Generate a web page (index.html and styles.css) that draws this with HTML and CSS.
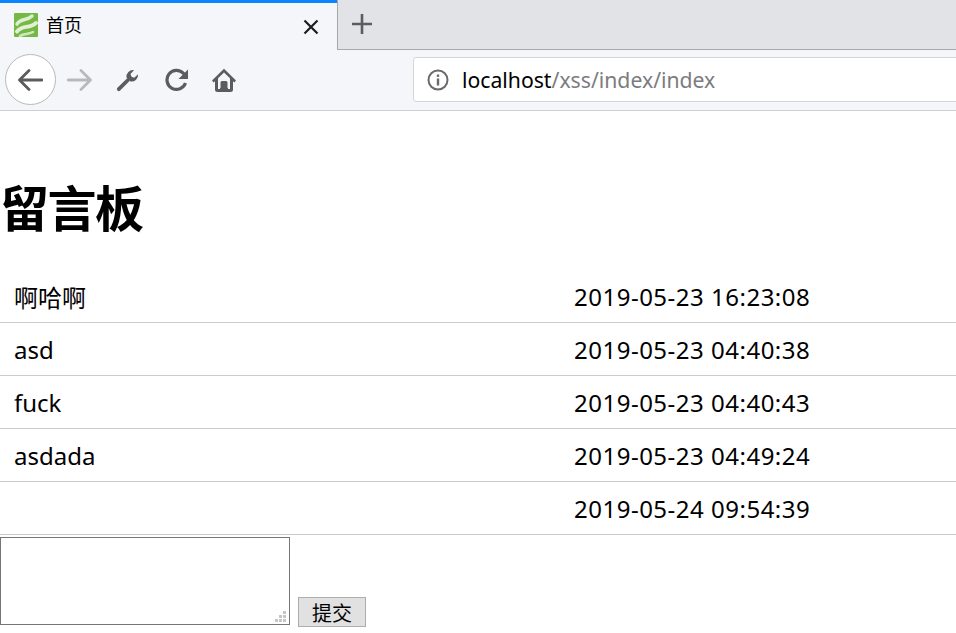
FILE: index.html
```html
<!DOCTYPE html>
<html lang="zh-CN">
<head>
<meta charset="utf-8">
<title>首页</title>
<link rel="stylesheet" href="styles.css">
</head>
<body>
<header class="browser">
  <div class="tabbar">
    <div class="tab">
      <svg class="favicon" viewBox="0 0 24 24" aria-hidden="true">
        <rect width="24" height="24" rx="1" fill="#74b944"/>
        <path d="M3 11C7 5 13 8 18 3" fill="none" stroke="#eaf4e0" stroke-width="3.400" stroke-linecap="round" opacity=".9"/>
        <path d="M3 18.500C8 12 15 16 22 10" fill="none" stroke="#eef6e6" stroke-width="3.800" stroke-linecap="round" opacity=".9"/>
        <path d="M6 23C10 20 14 22 19 19" fill="none" stroke="#dcecca" stroke-width="2.600" stroke-linecap="round" opacity=".9"/>
      </svg>
      <span class="tab-title">首页</span>
      <svg class="tab-close" viewBox="0 0 16 16" aria-hidden="true">
        <path d="M1.500 1.500L14.500 14.500M14.500 1.500L1.500 14.500" stroke="#1c1c1c" stroke-width="2.200" fill="none"/>
      </svg>
    </div>
    <div class="tab-rest">
      <svg class="tab-new" viewBox="0 0 20 20" aria-hidden="true">
        <path d="M10 0V20M0 10H20" stroke="#5c5c5f" stroke-width="2.600" fill="none" stroke-linecap="round"/>
      </svg>
    </div>
  </div>
  <div class="toolbar">
    <div class="back">
      <svg class="icon-arrow" viewBox="0 0 26 22" aria-hidden="true">
        <path d="M25 11H2.500M12 1.500L2.500 11L12 20.500" stroke="#5c5c5f" stroke-width="2.800" fill="none" stroke-linecap="round" stroke-linejoin="round"/>
      </svg>
    </div>
    <svg class="icon-arrow forward" viewBox="0 0 26 22" aria-hidden="true">
      <path d="M1 11H23.500M14 1.500L23.500 11L14 20.500" stroke="#b9b9bb" stroke-width="2.800" fill="none" stroke-linecap="round" stroke-linejoin="round"/>
    </svg>
    <svg class="icon wrench" viewBox="0 0 24 24" aria-hidden="true">
      <path d="M2.800 21.200L12 12" stroke="#5c5c5f" stroke-width="3.800" stroke-linecap="round" fill="none"/>
      <path d="M10.500 9.500A6.500 6.500 0 0 1 18 2.200L14.500 6L15.500 8.700L18.200 9.700L22 6.200A6.500 6.500 0 0 1 14.500 13.500Z" fill="#5c5c5f"/>
    </svg>
    <svg class="icon reload" viewBox="0 0 24 24" aria-hidden="true">
      <path d="M20.500 15A9.500 9.500 0 1 1 18.500 5.500L21 8" stroke="#5c5c5f" stroke-width="3.200" fill="none"/>
      <path d="M23 1.500V11H13.500Z" fill="#5c5c5f"/>
    </svg>
    <svg class="icon home" viewBox="0 0 24 24" aria-hidden="true">
      <path d="M12 .8L24 12.500L22.300 14.400L21 13.200V21.500A2.500 2.500 0 0 1 18.500 24H5.500A2.500 2.500 0 0 1 3 21.500V13.200L1.700 14.400L0 12.500ZM12 4.500L6 10.300V21H8.500V14.500A1.500 1.500 0 0 1 10 13H14A1.500 1.500 0 0 1 15.500 14.500V21H18V10.300Z" fill="#5c5c5f"/>
      <rect x="8" y="20" width="8" height="2" fill="#5c5c5f"/>
      <rect x="11.300" y="16.500" width="1.500" height="2" fill="#5c5c5f"/>
    </svg>
    <div class="address">
      <svg class="info" viewBox="0 0 22 22" aria-hidden="true">
        <circle cx="11" cy="11" r="9.500" stroke="#6a6a6d" stroke-width="2" fill="none"/>
        <rect x="9.800" y="9.500" width="2.400" height="7" fill="#6a6a6d"/>
        <rect x="9.800" y="5.500" width="2.400" height="2.400" fill="#6a6a6d"/>
      </svg>
      <span class="host">localhost</span><span class="path">/xss/index/index</span>
    </div>
  </div>
</header>
<main>
  <h1>留言板</h1>
  <table class="messages">
    <tr><td class="msg">啊哈啊</td><td class="time">2019-05-23 16:23:08</td></tr>
    <tr><td class="msg">asd</td><td class="time">2019-05-23 04:40:38</td></tr>
    <tr><td class="msg">fuck</td><td class="time">2019-05-23 04:40:43</td></tr>
    <tr><td class="msg">asdada</td><td class="time">2019-05-23 04:49:24</td></tr>
    <tr><td class="msg"></td><td class="time">2019-05-24 09:54:39</td></tr>
  </table>
  <form class="post">
    <div class="box-wrap">
      <textarea class="box" aria-label="留言"></textarea>
      <svg class="grip" viewBox="0 0 12 12" aria-hidden="true">
        <path d="M8 0h3v3H8zM4 4h3v3H4zM8 4h3v3H8zM0 8h3v3H0zM4 8h3v3H4zM8 8h3v3H8z" fill="#c6c6c6"/>
      </svg>
    </div>
    <button class="submit" type="button">提交</button>
  </form>
</main>
</body>
</html>
```

FILE: styles.css
```css
html, body {
  margin: 0;
  padding: 0;
  height: 633px;
  overflow: hidden;
  background: #fff;
}
body {
  font-family: "Noto Sans", "Noto Sans CJK SC", sans-serif;
  color: #000;
}
.browser {
  display: flex;
  flex-direction: column;
  height: 111px;
  background: #f5f6f9;
  border-bottom: 1px solid #cfcfd1;
  box-sizing: border-box;
  overflow: hidden;
}
.tabbar {
  display: flex;
  height: 50px;
}
.tab {
  width: 337px;
  box-sizing: border-box;
  border-top: 3px solid #0a84ff;
  display: flex;
  align-items: center;
  padding-left: 14px;
  padding-right: 18px;
}
.favicon {
  width: 24px;
  height: 24px;
  margin-top: -3px;
}
.tab-title {
  margin-left: 8px;
  font: 18px "Noto Sans CJK SC", sans-serif;
  flex: 1;
  margin-top: -5px;
}
.tab-close {
  width: 16px;
  height: 16px;
}
.tab-rest {
  flex: 1;
  background: #e2e3e6;
  border-left: 1px solid #a8a8aa;
  border-bottom: 1px solid #a8a8aa;
  display: flex;
  align-items: center;
  padding-left: 14px;
}
.tab-new {
  width: 20px;
  height: 20px;
  margin-top: -2px;
}
.toolbar {
  flex: 1;
  display: flex;
  align-items: center;
  padding-left: 5px;
}
.back {
  width: 51px;
  height: 51px;
  margin-bottom: 1px;
  padding-right: 2px;
  box-sizing: border-box;
  border: 1px solid #b9b9bb;
  border-radius: 50%;
  background: #fff;
  display: flex;
  align-items: center;
  justify-content: center;
  flex: none;
}
.icon-arrow {
  width: 26px;
  height: 22px;
  flex: none;
}
.forward {
  margin-left: 11px;
}
.icon {
  width: 24px;
  height: 24px;
  flex: none;
}
.wrench {
  margin-left: 23px;
}
.reload {
  margin-left: 25px;
}
.home {
  margin-left: 23px;
}
.address {
  margin-left: 177px;
  margin-bottom: 1px;
  width: 600px;
  height: 45px;
  flex: none;
  box-sizing: border-box;
  background: #fff;
  border: 1px solid #d6d6d8;
  border-radius: 3px;
  display: flex;
  align-items: center;
  padding-left: 13px;
  font: 21.200px "Noto Sans", sans-serif;
}
.info {
  width: 22px;
  height: 22px;
  margin-right: 13px;
}
.host {
  color: #000;
}
.path {
  color: #7c7c80;
}
h1 {
  font: bold 49px/60px "Noto Sans CJK SC", sans-serif;
  letter-spacing: -1.500px;
  margin: 65px 0 34px;
}
.messages {
  width: 100%;
  border-collapse: collapse;
  table-layout: fixed;
  font-size: 24px;
}
.messages td {
  height: 52px;
  padding: 0 14px;
  border-bottom: 1px solid #ccc;
  box-sizing: content-box;
}
.messages .msg {
  width: 532px;
}
.messages .time {
  letter-spacing: .5px;
}
.post {
  display: flex;
  align-items: flex-end;
  gap: 8px;
  margin-top: 2px;
}
.box-wrap {
  position: relative;
  margin-bottom: 2px;
}
.box {
  display: block;
  width: 290px;
  height: 88px;
  box-sizing: border-box;
  margin: 0;
  padding: 2px;
  border: 1px solid #767676;
  background: #fff;
  resize: none;
}
.grip {
  position: absolute;
  right: 3px;
  bottom: 2px;
  width: 12px;
  height: 12px;
}
.submit {
  width: 68px;
  height: 30px;
  box-sizing: border-box;
  padding: 0;
  font: 20px "Noto Sans CJK SC", sans-serif;
  color: #000;
  background: #e1e1e1;
  border: 1px solid #adadad;
}
```
